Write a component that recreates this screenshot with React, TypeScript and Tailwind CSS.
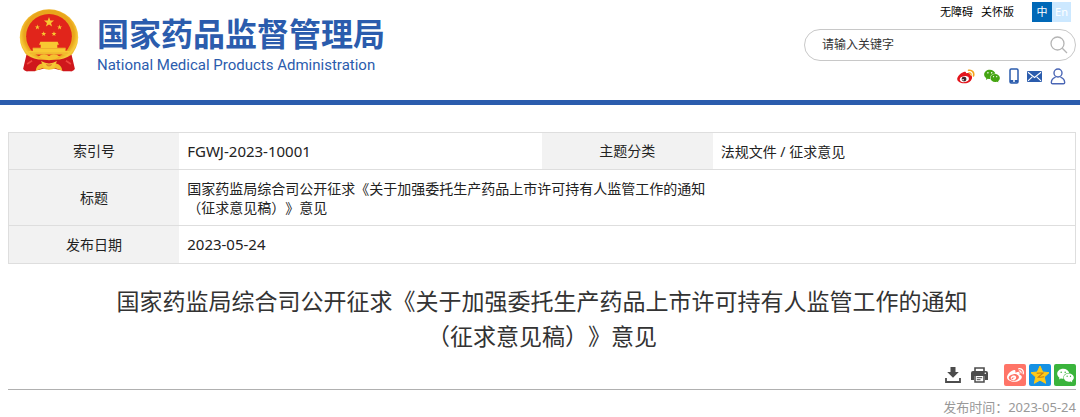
import React from "react";
import { AiFillWechat } from "react-icons/ai";
import { FaWeibo } from "react-icons/fa";

const STAR = "M0-10 2.4-3.2 9.5-3.1 3.8 1.2 5.9 8.1 0 4 -5.9 8.1 -3.8 1.2 -9.5-3.1 -2.4-3.2Z";

function Emblem() {
  return (
    <svg viewBox="0 0 180 190" className="h-[63px] w-[60px] shrink-0" aria-hidden="true">
      <defs>
        <radialGradient id="gold" cx="50%" cy="45%" r="55%">
          <stop offset="0.78" stopColor="#e9a51c" />
          <stop offset="0.9" stopColor="#f8cc3c" />
          <stop offset="1" stopColor="#e8ac22" />
        </radialGradient>
      </defs>
      <path d="M28 136 90 150 152 136 160 188 122 184 90 176 58 184 22 188Z" fill="#c9151a" />
      <ellipse cx="90" cy="85" rx="88" ry="84" fill="url(#gold)" />
      <ellipse cx="90" cy="82" rx="69" ry="67" fill="#e1251b" />
      <g fill="#f8c832">
        <path d={STAR} transform="translate(90 40) scale(1.6)" />
        <path d={STAR} transform="translate(55 55) scale(.8)" />
        <path d={STAR} transform="translate(122 55) scale(.8)" />
        <path d={STAR} transform="translate(74 75) scale(.8)" />
        <path d={STAR} transform="translate(105 75) scale(.8)" />
        <path d="M64 99h52l4 9h-5v9h25v10h14l-8 10H35l-8-10h14v-10h24v-9h-5z" />
      </g>
      <path d="M41 119h98M33 133h114" stroke="#e5932a" strokeWidth="1.500" />
      <path d="M22 138 12 180q4 8 16 8h20l14-12 28-2 28 2 14 12h20q12 0 16-8l-10-42q-24 16-52 15H74q-28 1-52-15z" fill="#cf171c" />
      <path d="M58 143q17-12 32-1 15-11 32 1l-13 8q-19 7-38 0z" fill="#f5c22f" />
      <path d="m24 166 15-10M156 166l-15-10" stroke="#ef463e" strokeWidth="5" />
      <path d="M50 186q1-17 18-22l22 8 22-8q17 5 18 22l-20-7q-20 9-40 0z" fill="#f3bd2c" />
      <path d="M66 157q24 15 48 0l-8 19q-16 8-32 0z" fill="#f6c936" />
      <path d="M80 165q10 5 20 0l-4 7q-6 3-12 0z" fill="#e3872a" />
    </svg>
  );
}

function WeiboColor() {
  return (
    <svg viewBox="0 0 54 46" className="h-[15px] w-[18px]" aria-hidden="true">
      <path d="M20 9c5-2 8 0 7 4 7-2 13-1 12 5 6 2 8 6 6 12-3 9-12 14-24 14C9 44 0 38 0 31c0-9 12-20 20-22Z" fill="#e3151c" />
      <ellipse cx="22" cy="31" rx="14" ry="9" fill="#fff" transform="rotate(-8 22 31)" />
      <circle cx="21" cy="31" r="7.500" fill="#40292d" />
      <circle cx="18" cy="33" r="2.500" fill="#fff" />
      <path d="M35 4c11-2 18 7 15 17" fill="none" stroke="#f5a51b" strokeWidth="5" strokeLinecap="round" />
      <path d="M36 12c5-1 8 2 6 7" fill="none" stroke="#f5a51b" strokeWidth="4" strokeLinecap="round" />
    </svg>
  );
}

function Phone() {
  return (
    <svg viewBox="0 0 10 16" className="h-4 w-[10px]" aria-hidden="true">
      <rect x="1" y="1" width="8" height="14" rx="1.2" fill="#fff" stroke="#2b5cad" strokeWidth="1.5" />
      <path d="M1 12h8v2.5H1z" fill="#2b5cad" />
      <circle cx="5" cy="13.1" r="1" fill="#fff" />
    </svg>
  );
}

function Mail() {
  return (
    <svg viewBox="0 0 15 11" className="h-[11px] w-[15px]" aria-hidden="true">
      <rect width="15" height="11" rx="1" fill="#2b5cad" />
      <path d="m1 1.3 6.5 5.2L14 1.3M1 9.8l4.3-4M14 9.8l-4.3-4" fill="none" stroke="#fff" strokeWidth="1.1" />
    </svg>
  );
}

function Person() {
  return (
    <svg viewBox="0 0 16 17" className="h-[17px] w-4" fill="none" stroke="#4a66b5" strokeWidth="1.4" aria-hidden="true">
      <circle cx="8" cy="5" r="4" />
      <path d="M5.600 9.200C3 10 1.500 11.900 1.300 14.500q0 1.300 1.300 1.300h10.800q1.300 0 1.300-1.300C14.500 11.900 13 10 10.400 9.200" strokeLinejoin="round" />
    </svg>
  );
}

function Search() {
  return (
    <svg viewBox="0 0 18 18" className="h-[18px] w-[18px]" fill="none" stroke="#b4b4b4" strokeWidth="1.3" aria-hidden="true">
      <circle cx="7.500" cy="7.500" r="6.500" />
      <path d="m12.300 12.300 4.700 4.700" />
    </svg>
  );
}

function Download() {
  return (
    <svg viewBox="0 0 16 16" className="h-4 w-4" aria-hidden="true">
      <path d="M5.500 0h5v5h3.300L8 10.800 2.200 5h3.300z" fill="#4c4c4c" />
      <path d="M1 11v4h14v-4" fill="none" stroke="#4c4c4c" strokeWidth="1.800" />
    </svg>
  );
}

function Printer() {
  return (
    <svg viewBox="0 0 17 16" className="h-4 w-[17px]" aria-hidden="true">
      <path d="M4 4.500V1h9v3.500" fill="none" stroke="#4c4c4c" strokeWidth="1.600" />
      <path d="M2 4h13q2 0 2 2v7h-3V9H3v4H0V6q0-2 2-2z" fill="#4c4c4c" />
      <path d="M4 9v6h9V9" fill="#fff" stroke="#4c4c4c" strokeWidth="1.500" />
      <path d="M5.800 10.700h5.400M5.800 12.700h3.700" stroke="#4c4c4c" />
      <circle cx="14.300" cy="6.300" r=".8" fill="#fff" />
    </svg>
  );
}

function QzoneStar() {
  return (
    <svg viewBox="0 0 22 22" className="h-[22px] w-[22px]" aria-hidden="true">
      <path d="m11 2 2.700 6 6.300.7-4.700 4.300 1.300 6.300-5.600-3.200-5.600 3.200L6.700 13 2 8.700 8.300 8z" fill="#ffca18" stroke="#ffca18" strokeLinejoin="round" />
      <path d="M7.700 9.300q3.500-.6 6.300-.2l-4.800 4q3 .4 6-.3" fill="none" stroke="#c27c10" strokeWidth="1.100" />
    </svg>
  );
}

const labelCell = "w-[16%] bg-[#f2f2f2] px-2 pb-px text-center font-normal";
const valueCell = "px-2 text-left";
const shareButton = "flex h-[22px] w-[22px] items-center justify-center rounded-[2px]";

export default function App() {
  return (
    <div className="bg-white font-['Noto_Sans','Noto_Sans_CJK_SC',sans-serif] text-[#222] [text-spacing-trim:space-all]">
      <header className="flex h-[105px] items-start justify-between border-b-[5px] border-[#2b5cad] pr-1 pl-[19px]">
        <a href="#home" className="flex items-start gap-[18px] pt-[9px] text-[#2b5cad]">
          <Emblem />
          <span className="flex flex-col pt-[5px]">
            <span className="text-[32px] leading-10 font-bold whitespace-nowrap">国家药品监督管理局</span>
            <span className="font-['Roboto','Liberation_Sans',sans-serif] text-[15px] leading-[22px] whitespace-nowrap">
              National Medical Products Administration
            </span>
          </span>
        </a>
        <div className="flex w-[272px] flex-col">
          <div className="flex items-center justify-end pt-[2px] pr-[5px] text-[11px] leading-5 text-black">
            <a href="#accessible" className="mr-2">无障碍</a>
            <a href="#care" className="mr-[18px]">关怀版</a>
            <a href="#zh" className="w-5 bg-[#0068b7] text-center text-white">中</a>
            <a href="#en" className="w-[19px] bg-[#cce8ff] text-center text-white">En</a>
          </div>
          <form className="mt-[7px] flex h-8 items-center rounded-full border border-[#c8c8c8] pr-[7px] pl-[17px]" onSubmit={(e) => e.preventDefault()}>
            <input
              type="text"
              aria-label="请输入关键字"
              placeholder="请输入关键字"
              className="min-w-0 flex-1 bg-transparent text-xs outline-none placeholder:text-[#333]"
            />
            <button type="submit" aria-label="搜索"><Search /></button>
          </form>
          <div className="mt-[6px] flex h-[18px] items-center justify-end gap-2 pr-[10px]">
            <a href="#weibo" aria-label="微博"><WeiboColor /></a>
            <a href="#wechat" aria-label="微信" className="text-[#45a512]"><AiFillWechat size={18} /></a>
            <a href="#mobile" aria-label="手机版"><Phone /></a>
            <a href="#mail" aria-label="邮箱"><Mail /></a>
            <a href="#user" aria-label="个人中心"><Person /></a>
          </div>
        </div>
      </header>

      <main className="pt-[27px] pr-1 pl-2">
        <table className="w-full table-fixed border-collapse border border-[#dedede] text-sm leading-[19px]">
          <tbody>
            <tr className="h-[37px] border-b border-[#dedede]">
              <th scope="row" className={labelCell}>索引号</th>
              <td className={`${valueCell} text-[15px]`}>FGWJ-2023-10001</td>
              <th scope="row" className={labelCell}>主题分类</th>
              <td className={valueCell}>法规文件 / 征求意见</td>
            </tr>
            <tr className="h-14 border-b border-[#dedede]">
              <th scope="row" className={labelCell}>标题</th>
              <td colSpan={3} className={valueCell}>
                国家药监局综合司公开征求《关于加强委托生产药品上市许可持有人监管工作的通知
                <br />
                （征求意见稿）》意见
              </td>
            </tr>
            <tr className="h-[38px]">
              <th scope="row" className={labelCell}>发布日期</th>
              <td colSpan={3} className={`${valueCell} text-[15px]`}>2023-05-24</td>
            </tr>
          </tbody>
        </table>

        <h1 className="mt-5 text-center text-[23px] leading-[35px] text-[#333]">
          国家药监局综合司公开征求《关于加强委托生产药品上市许可持有人监管工作的通知
          <br />
          （征求意见稿）》意见
        </h1>

        <div className="mt-[10px] flex items-center justify-end border-b border-[#b0b0b0] pb-[3px]">
          <button type="button" aria-label="下载" className="mr-[10px]"><Download /></button>
          <button type="button" aria-label="打印" className="mr-4"><Printer /></button>
          <div className="flex gap-[3px] text-white">
            <a href="#share-weibo" aria-label="分享到微博" className={`${shareButton} bg-[#ff7467]`}><FaWeibo size={17} /></a>
            <a href="#share-qzone" aria-label="分享到QQ空间" className={`${shareButton} bg-[#1692e4]`}><QzoneStar /></a>
            <a href="#share-wechat" aria-label="分享到微信" className={`${shareButton} bg-[#3ab43c]`}><AiFillWechat size={19} /></a>
          </div>
        </div>
        <p className="pt-[7px] text-right text-[13px] leading-5 text-[#999]">发布时间：2023-05-24</p>
      </main>
    </div>
  );
}
